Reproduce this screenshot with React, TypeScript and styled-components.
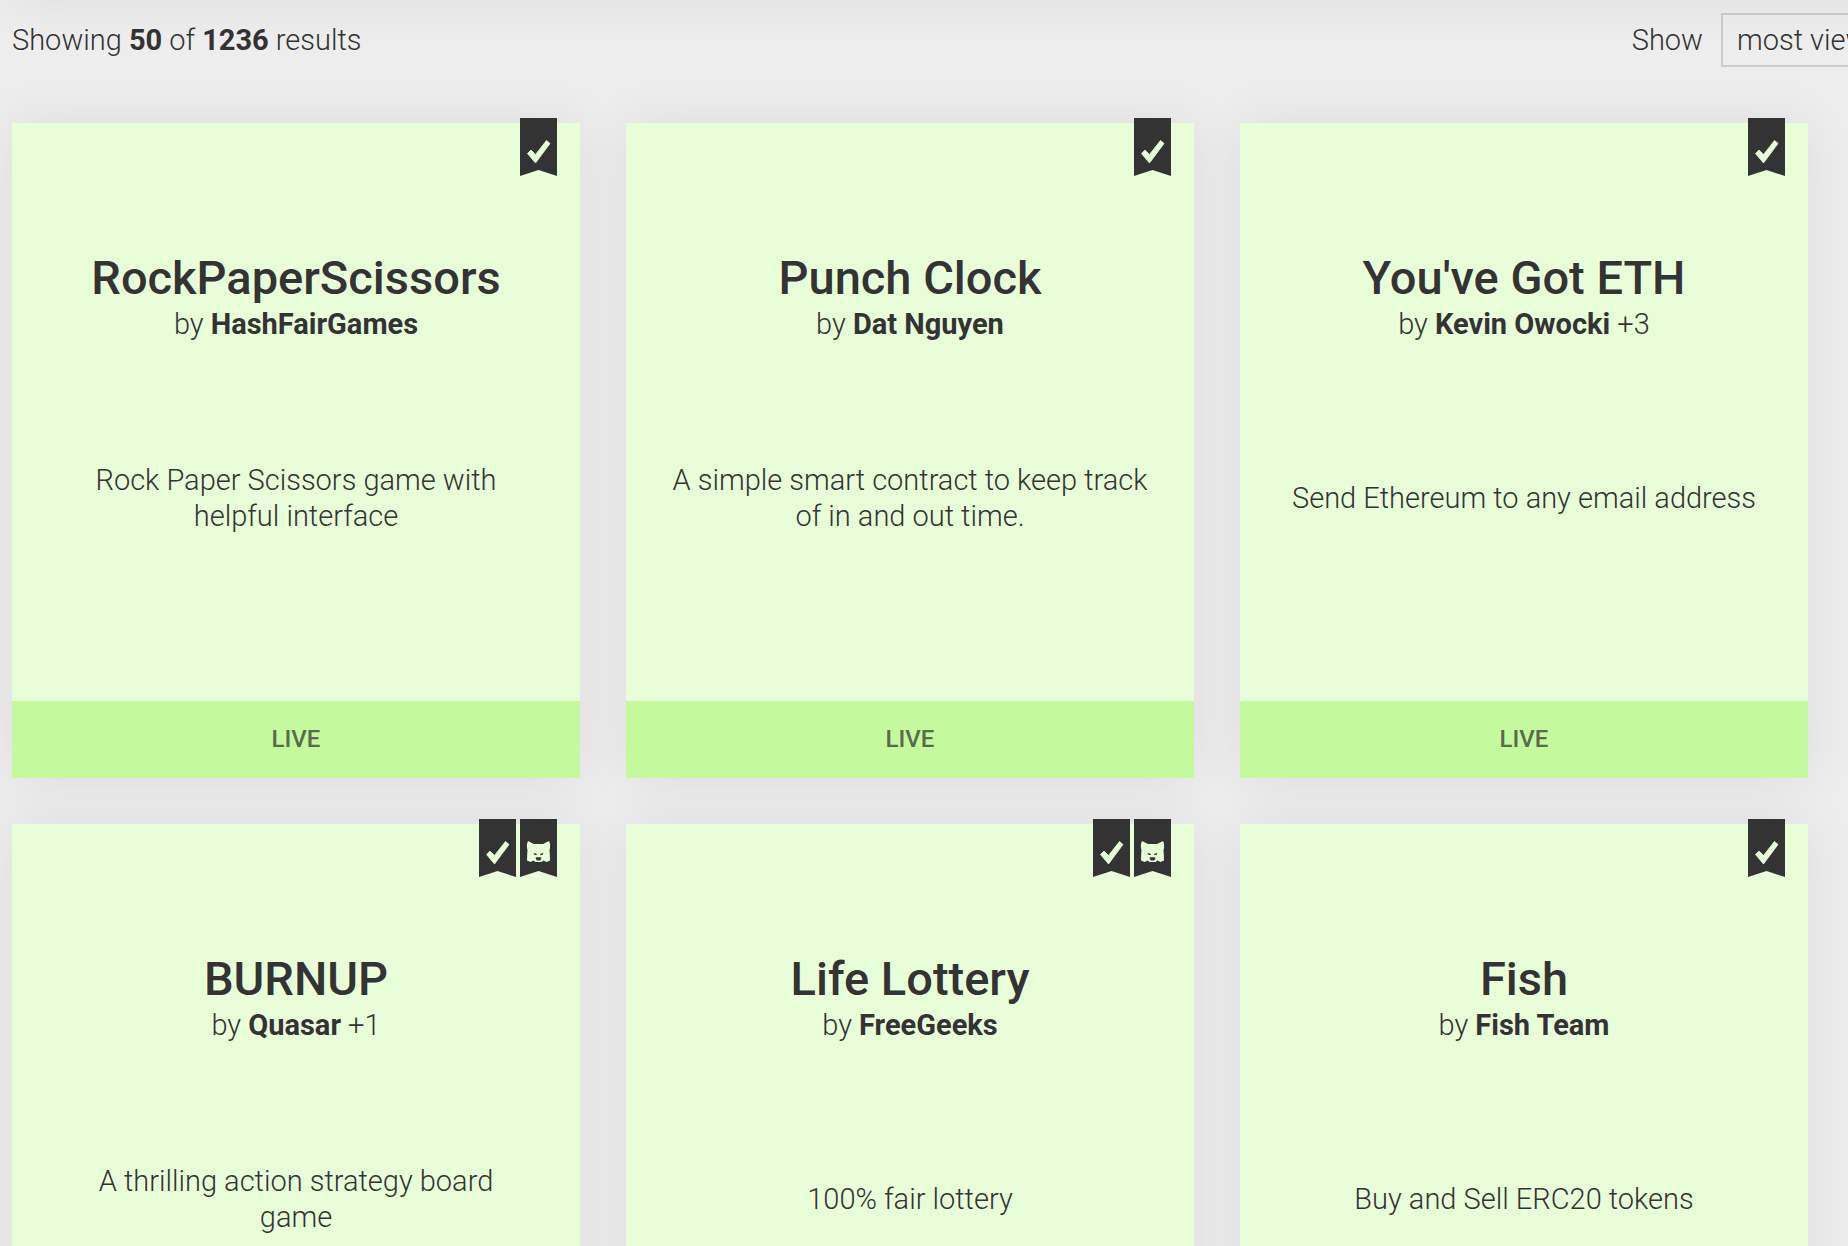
import React from "react";
import styled, { createGlobalStyle } from "styled-components";

const ink = "#333333";
const mint = "#e7fed8";
const shadow = "0 0 50px rgba(0, 0, 0, 0.07)";

const GlobalStyle = createGlobalStyle`
  *, *::before, *::after { box-sizing: border-box; }
  body {
    margin: 0;
    background: #ededed;
    color: ${ink};
    font-family: Roboto, "Open Sans", sans-serif;
    font-weight: 300;
    font-size: 29px;
    line-height: 36px;
    overflow-x: hidden;
  }
`;

const Page = styled.main`
  position: relative;
  padding: 0 40px 46px 12px;
  overflow: hidden;
  min-height: 100vh;
`;

const PanelShadow = styled.div`
  position: absolute;
  left: 12px;
  right: -160px;
  bottom: 100%;
  height: 200px;
  box-shadow: ${shadow};
`;

const Toolbar = styled.header`
  display: flex;
  justify-content: space-between;
  align-items: center;
  padding: 13px 0 0;
  margin: 0 -160px 56px 0;
`;

const Summary = styled.p`
  margin: 0;

  b {
    font-weight: 700;
  }
`;

const Sort = styled.div`
  display: flex;
  align-items: center;
  gap: 18px;
`;

const SortSelect = styled.select`
  appearance: none;
  width: 247px;
  height: 54px;
  padding: 0 14px;
  border: 2px solid #cccccc;
  border-radius: 0;
  background: transparent;
  color: inherit;
  font: inherit;
`;

const Grid = styled.section`
  display: grid;
  grid-template-columns: repeat(3, minmax(0, 1fr));
  gap: 46px;
`;

const Card = styled.article`
  position: relative;
  display: flex;
  flex-direction: column;
  background: ${mint};
  text-align: center;
  box-shadow: ${shadow};
`;

const Body = styled.div`
  display: grid;
  grid-template-rows: auto 1fr;
  height: 578px;
  padding: 126px 44px 47px;
`;

const Title = styled.h2`
  margin: 0;
  font-size: 47px;
  line-height: 57px;
  font-weight: 500;
`;

const Author = styled.p`
  margin: 0;

  b {
    font-weight: 700;
  }
`;

const Description = styled.p`
  align-self: center;
  margin: 0;
  white-space: pre-line;
`;

const Status = styled.div`
  background: #c5f99e;
  color: #586c4a;
  font-size: 24px;
  line-height: 77px;
  font-weight: 500;
`;

const Ribbons = styled.div`
  position: absolute;
  top: -5px;
  right: 23px;
  display: flex;
  gap: 4px;
`;

const Ribbon = styled.svg`
  display: block;
  width: 37px;
  height: 58px;
`;

type Badge = "check" | "cat";

const BadgeIcon = ({ kind }: { kind: Badge }) => (
  <Ribbon viewBox="0 0 37 58" role="img" aria-label={kind}>
    <path d="M0 0H37V58L18.500 52L0 58Z" fill={ink} />
    {kind === "check" ? (
      <path
        d="M7.500 35.500L11 32L15.500 36.500L26.500 22.500L30 25.500L15.500 45Z"
        fill={mint}
        stroke={mint}
        strokeWidth="0.800"
        strokeLinejoin="round"
      />
    ) : (
      <>
        <path
          d="M8 22L14 25H23L29 22Q31 26 29.500 31L29.800 35L30 41.500L26.500 43L23.500 41.500L21.500 43H15.500L13.500 41.500L10.500 43L7 41.500L7.200 35L7.500 31Q6 26 8 22Z"
          fill={mint}
        />
        <path d="M13.500 33.800L16.800 35V36H14.500ZM23.500 33.800L20.200 35V36H22.500Z" fill={ink} />
        <path d="M15.800 38.300H21.200V40L20 41.500H17L15.800 40Z" fill={ink} />
      </>
    )}
  </Ribbon>
);

interface Dapp {
  name: string;
  author: string;
  more?: string;
  text: string;
  badges: Badge[];
}

const dapps: Dapp[] = [
  { name: "RockPaperScissors", author: "HashFairGames", text: "Rock Paper Scissors game with\nhelpful interface", badges: ["check"] },
  { name: "Punch Clock", author: "Dat Nguyen", text: "A simple smart contract to keep track\nof in and out time.", badges: ["check"] },
  { name: "You've Got ETH", author: "Kevin Owocki", more: "+3", text: "Send Ethereum to any email address", badges: ["check"] },
  { name: "BURNUP", author: "Quasar", more: "+1", text: "A thrilling action strategy board\ngame", badges: ["check", "cat"] },
  { name: "Life Lottery", author: "FreeGeeks", text: "100% fair lottery", badges: ["check", "cat"] },
  { name: "Fish", author: "Fish Team", text: "Buy and Sell ERC20 tokens", badges: ["check"] },
];

export default function App() {
  return (
    <>
      <GlobalStyle />
      <Page>
        <PanelShadow />
        <Toolbar>
          <Summary>
            Showing <b>50</b> of <b>1236</b> results
          </Summary>
          <Sort>
            <label htmlFor="sort">Show</label>
            <SortSelect id="sort" defaultValue="viewed">
              <option value="viewed">most viewed</option>
            </SortSelect>
          </Sort>
        </Toolbar>
        <Grid>
          {dapps.map((d) => (
            <Card key={d.name}>
              <Ribbons>
                {d.badges.map((b) => (
                  <BadgeIcon key={b} kind={b} />
                ))}
              </Ribbons>
              <Body>
                <div>
                  <Title>{d.name}</Title>
                  <Author>
                    by <b>{d.author}</b> {d.more}
                  </Author>
                </div>
                <Description>{d.text}</Description>
              </Body>
              <Status>LIVE</Status>
            </Card>
          ))}
        </Grid>
      </Page>
    </>
  );
}
